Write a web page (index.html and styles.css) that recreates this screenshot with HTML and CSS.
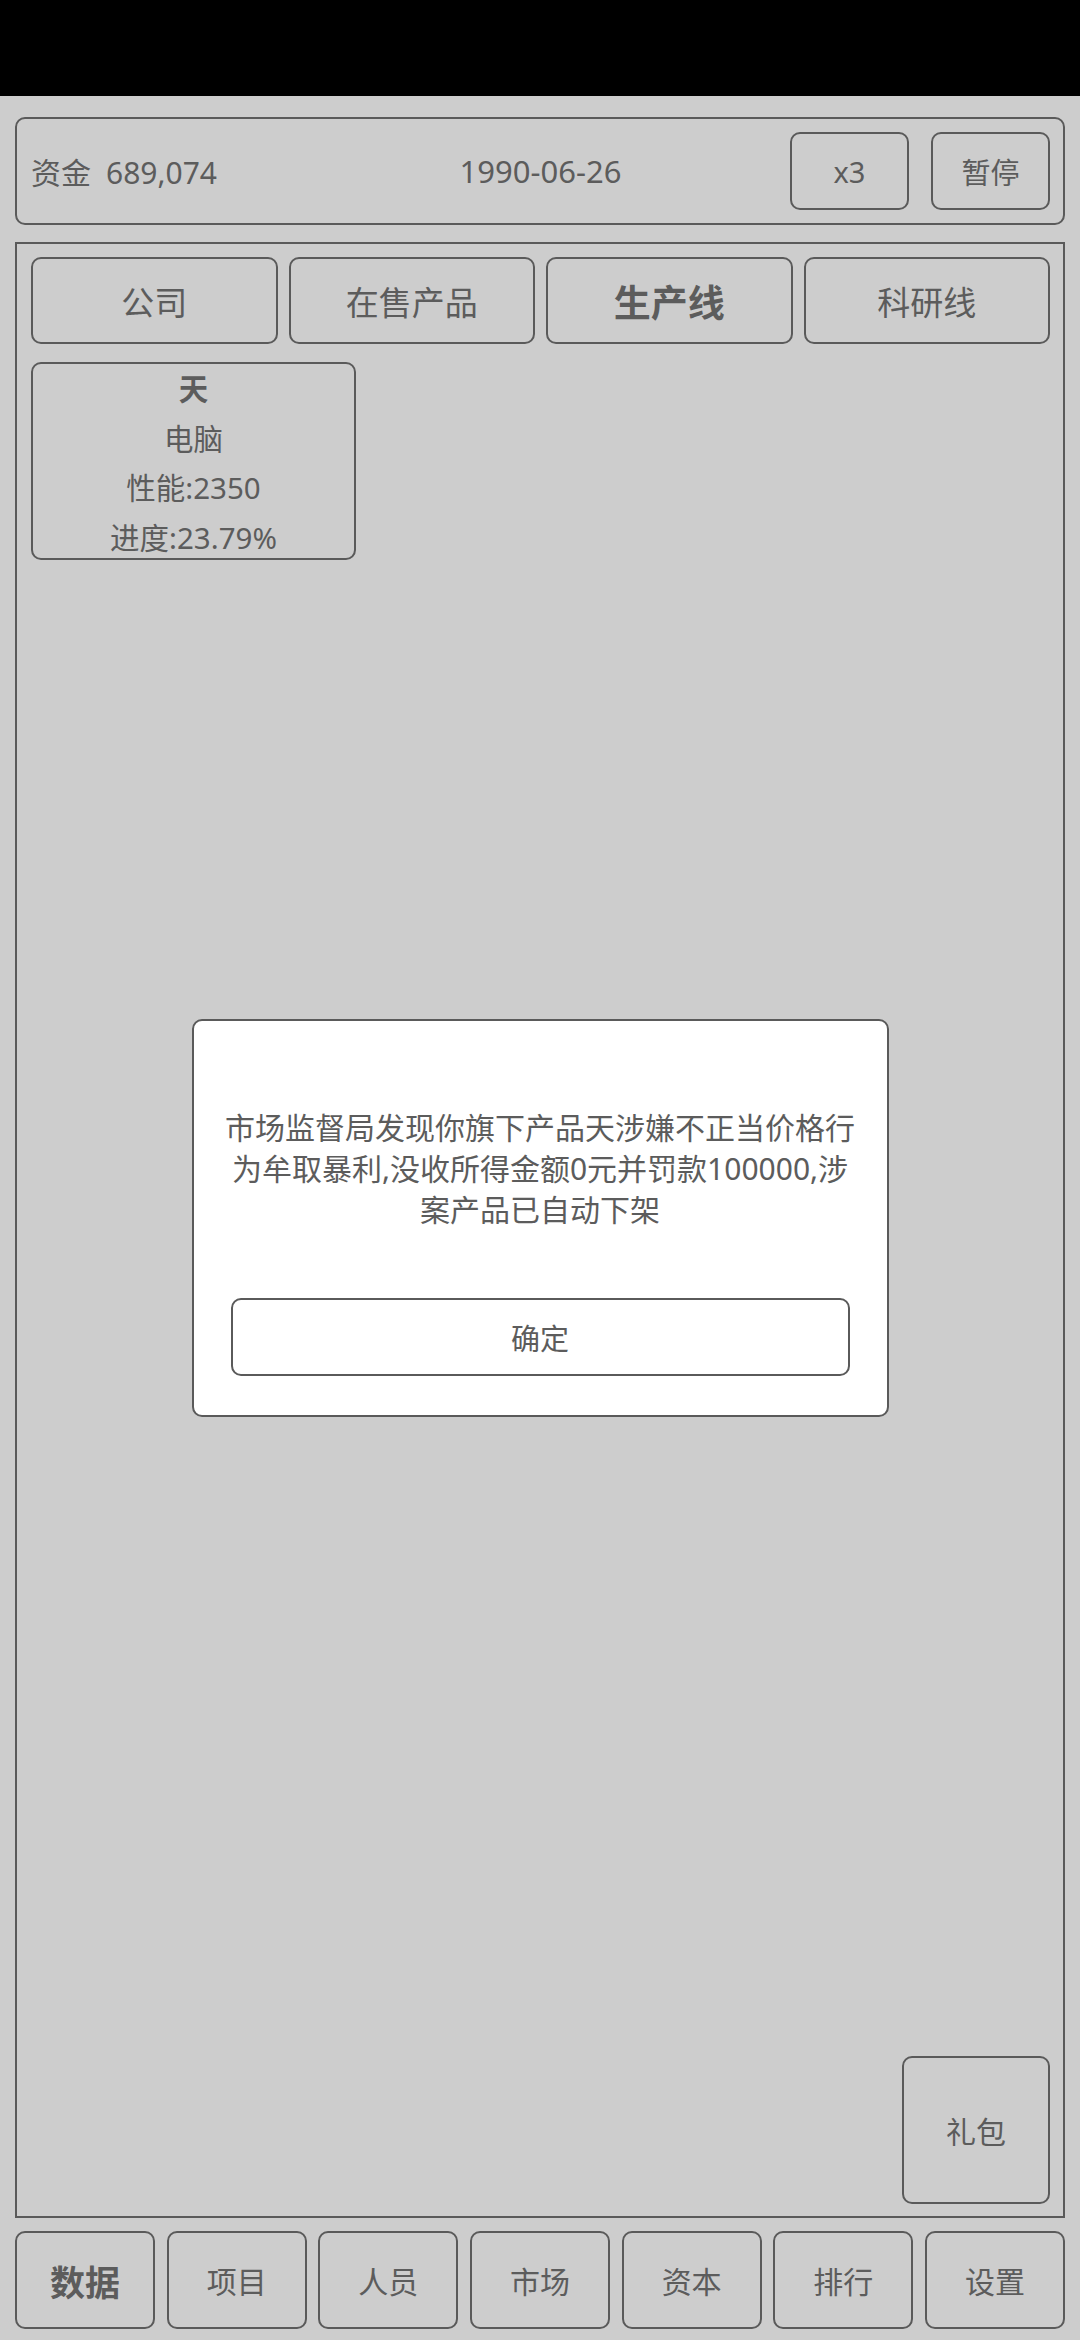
FILE: index.html
```html
<html>
<head>
    <meta charset="UTF-8">
    <meta name="viewport" content="width=device-width, initial-scale=1.0">
    <title>公司经营</title>
    <link rel="stylesheet" href="styles.css">
</head>

<body>
    <div class="status-bar"></div>

    <div class="top-panel">
        <div class="money">资金<span class="money-value">689,074</span></div>
        <div class="date">1990-06-26</div>
        <div class="controls">
            <button class="ctrl">x3</button>
            <button class="ctrl">暂停</button>
        </div>
    </div>

    <div class="main-panel">
        <div class="tabs">
            <button class="tab">公司</button>
            <button class="tab">在售产品</button>
            <button class="tab active">生产线</button>
            <button class="tab">科研线</button>
        </div>
        <div class="lines">
            <div class="line-card">
                <div class="line-name">天</div>
                <div>电脑</div>
                <div>性能:2350</div>
                <div>进度:23.79%</div>
            </div>
        </div>
        <button class="gift">礼包</button>
    </div>

    <div class="nav">
        <button class="nav-item active">数据</button>
        <button class="nav-item">项目</button>
        <button class="nav-item">人员</button>
        <button class="nav-item">市场</button>
        <button class="nav-item">资本</button>
        <button class="nav-item">排行</button>
        <button class="nav-item">设置</button>
    </div>

    <div class="dialog-layer">
        <div class="dialog">
            <div class="dialog-text">市场监督局发现你旗下产品天涉嫌不正当价格行为牟取暴利,没收所得金额0元并罚款100000,涉案产品已自动下架</div>
            <button class="dialog-btn">确定</button>
        </div>
    </div>
</body>
</html>
```

FILE: styles.css
```css
* {
    box-sizing: border-box;
}
body {
    margin: 0;
    background: #cdcdcd;
    color: #5c5c5c;
    font-family: "Noto Sans", "Noto Sans CJK SC", sans-serif;
}
button {
    font-family: inherit;
    color: #5c5c5c;
    background: #cdcdcd;
    border: 2px solid #5a5a5a;
    border-radius: 10px;
    padding: 0;
    cursor: pointer;
}
.status-bar {
    height: 96px;
    background: #000;
}

.top-panel {
    margin: 21px 15px 0;
    height: 108px;
    border: 2px solid #5a5a5a;
    border-radius: 10px;
    padding: 0 13px 0 14px;
    display: grid;
    grid-template-columns: 1fr auto 1fr;
    align-items: center;
    font-size: 30px;
}
.money-value {
    margin-left: 15px;
}
.date {
    font-size: 31px;
}
.controls {
    display: flex;
    justify-content: flex-end;
    gap: 22px;
}
.ctrl {
    width: 119px;
    height: 78px;
    font-size: 29px;
}

.main-panel {
    margin: 17px 15px 0;
    height: 1976px;
    border: 2px solid #5a5a5a;
    padding: 13px 13px 12px 14px;
    display: flex;
    flex-direction: column;
}
.tabs {
    display: grid;
    grid-template-columns: repeat(4, 1fr);
    gap: 11px;
}
.tab {
    height: 87px;
    font-size: 33px;
}
.tab.active {
    font-weight: bold;
    font-size: 37px;
}
.lines {
    margin-top: 18px;
    display: flex;
    gap: 12px;
}
.line-card {
    width: 325px;
    height: 198px;
    border: 2px solid #5a5a5a;
    border-radius: 10px;
    text-align: center;
    font-size: 29.5px;
    line-height: 49.5px;
}
.line-name {
    font-weight: bold;
}
.gift {
    margin-top: auto;
    align-self: flex-end;
    width: 148px;
    height: 148px;
    font-size: 30px;
}

.nav {
    margin: 13px 15px 0;
    display: grid;
    grid-template-columns: repeat(7, 1fr);
    gap: 11.5px;
}
.nav-item {
    height: 98px;
    font-size: 30px;
}
.nav-item.active {
    font-weight: bold;
    font-size: 35px;
}

.dialog-layer {
    position: fixed;
    top: 96px;
    left: 0;
    right: 0;
    bottom: 0;
    display: flex;
    align-items: center;
    justify-content: center;
}
.dialog {
    width: 697px;
    height: 398px;
    background: #fff;
    border: 2px solid #5a5a5a;
    border-radius: 10px;
    padding: 86px 26px 0;
    display: flex;
    flex-direction: column;
    align-items: center;
}
.dialog-text {
    font-size: 30px;
    line-height: 41px;
    text-align: center;
}
.dialog-btn {
    margin-top: 68px;
    width: 619px;
    height: 78px;
    background: #fff;
    font-size: 29px;
}
```
